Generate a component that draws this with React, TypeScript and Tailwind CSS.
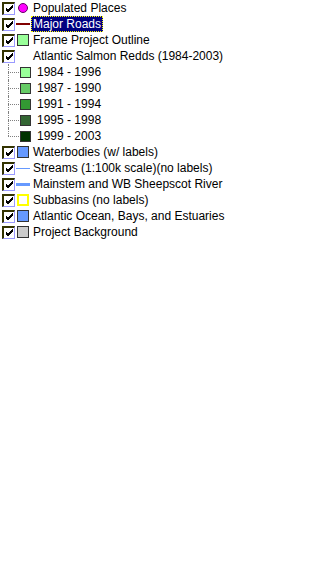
import React from "react";

type Sym =
  | { kind: "circle" }
  | { kind: "line"; color: string; h: number }
  | { kind: "box"; fill: string; border?: string }
  | { kind: "none" };

type Row = { label: string; sym: Sym; selected?: boolean };

const TOP: Row[] = [
  { label: "Populated Places", sym: { kind: "circle" } },
  { label: "Major Roads", sym: { kind: "line", color: "#800000", h: 2 }, selected: true },
  { label: "Frame Project Outline", sym: { kind: "box", fill: "#99ff99" } },
  { label: "Atlantic Salmon Redds (1984-2003)", sym: { kind: "none" } },
];

const REDDS = [
  { label: "1984 - 1996", fill: "#99ff99" },
  { label: "1987 - 1990", fill: "#66cc66" },
  { label: "1991 - 1994", fill: "#339933" },
  { label: "1995 - 1998", fill: "#336633" },
  { label: "1999 - 2003", fill: "#003300" },
];

const BOTTOM: Row[] = [
  { label: "Waterbodies (w/ labels)", sym: { kind: "box", fill: "#6699ff" } },
  { label: "Streams (1:100k scale)(no labels)", sym: { kind: "line", color: "#6699ff", h: 1 } },
  { label: "Mainstem and WB Sheepscot River", sym: { kind: "line", color: "#6699ff", h: 3 } },
  { label: "Subbasins (no labels)", sym: { kind: "box", fill: "#ffffff", border: "#ffff00" } },
  { label: "Atlantic Ocean, Bays, and Estuaries", sym: { kind: "box", fill: "#6699ff" } },
  { label: "Project Background", sym: { kind: "box", fill: "#cccccc" } },
];

function CheckBox() {
  return (
    <div className="w-[13px] h-[13px] shrink-0 border-t-2 border-l-2 border-t-[#333300] border-l-[#333300] border-r border-b border-r-[#9999ff] border-b-[#9999ff] bg-white flex items-center justify-center">
      <svg width="9" height="9" viewBox="0 0 9 9">
        <path d="M1 4 L3 6 L8 1 M1 5 L3 7 L8 2 M1 6 L3 8 L8 3" stroke="#000" strokeWidth="1" fill="none" />
      </svg>
    </div>
  );
}

function Symbol({ sym }: { sym: Sym }) {
  if (sym.kind === "circle")
    return (
      <div className="w-[14px] flex justify-center">
        <div className="w-[10px] h-[10px] rounded-full bg-[#ff00ff] border border-[#660066]" />
      </div>
    );
  if (sym.kind === "line")
    return (
      <div className="w-[14px] flex items-center">
        <div className="w-[14px]" style={{ height: sym.h, background: sym.color }} />
      </div>
    );
  if (sym.kind === "box")
    return (
      <div className="w-[14px] flex justify-center">
        <div
          className="w-[12px] h-[12px] border"
          style={{ background: sym.fill, borderColor: sym.border ?? "#333333", borderWidth: sym.border ? 2 : 1 }}
        />
      </div>
    );
  return <div className="w-[14px]" />;
}

function LegendRow({ row }: { row: Row }) {
  return (
    <div className="h-[16px] flex items-center pl-[2px]">
      <CheckBox />
      <div className="ml-[1px]">
        <Symbol sym={row.sym} />
      </div>
      <span
        className={
          row.selected
            ? "ml-[1px] px-[1px] h-[16px] leading-[14px] bg-[#000080] text-white border border-dotted border-[#ffff00]"
            : "ml-[3px]"
        }
      >
        {row.label}
      </span>
    </div>
  );
}

export default function App() {
  return (
    <div className="w-[327px] h-[571px] bg-white text-black text-[12px] leading-[16px] font-['Liberation_Sans',Arial,sans-serif]">
      {TOP.map((r) => (
        <LegendRow key={r.label} row={r} />
      ))}
      <div>
        {REDDS.map((r, i) => (
          <div key={r.label} className="h-[16px] flex items-center">
            <div className="w-[8px]" />
            <div className="relative w-[12px] h-[16px]">
              <div
                className={
                  "absolute left-0 top-0 border-l border-dotted border-[#808080] " +
                  (i === REDDS.length - 1 ? "h-[8px]" : "h-[16px]")
                }
              />
              <div className="absolute left-0 top-[8px] w-[11px] border-t border-dotted border-[#808080]" />
            </div>
            <div className="w-[11px] h-[11px] border border-[#333333]" style={{ background: r.fill }} />
            <span className="ml-[6px]">{r.label}</span>
          </div>
        ))}
      </div>
      {BOTTOM.map((r) => (
        <LegendRow key={r.label} row={r} />
      ))}
    </div>
  );
}
